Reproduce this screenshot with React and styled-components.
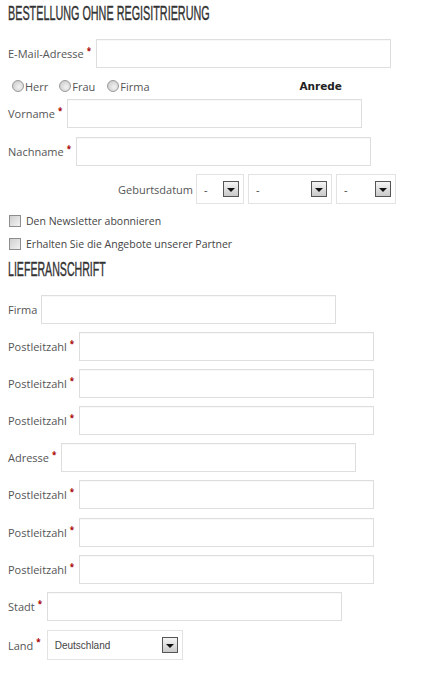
import React from "react";
import styled, { createGlobalStyle } from "styled-components";

const Global = createGlobalStyle`
  html, body { margin: 0; padding: 0; background: #fff; }
  body { font-family: "Open Sans", "Liberation Sans", sans-serif; color: #555; }
  * { box-sizing: border-box; }
`;

const Page = styled.div`
  width: 429px;
  height: 679px;
  padding: 0 8px;
  display: flex;
  flex-direction: column;
  overflow: hidden;
`;

const Heading = styled.h2`
  margin: ${(p) => p.$mt}px 0 0 0;
  height: 20px;
  line-height: 20px;
  font-family: "Liberation Sans", sans-serif;
  font-weight: 400;
  font-size: 20px;
  color: #333;
  white-space: nowrap;
  span {
    display: inline-block;
    transform: scaleX(${(p) => p.$sx});
    transform-origin: 0 50%;
    -webkit-text-stroke: 0.4px #333;
  }
`;

const Row = styled.div`
  display: flex;
  align-items: center;
  margin-top: ${(p) => p.$mt}px;
  padding-left: ${(p) => p.$pl || 0}px;
  height: ${(p) => p.$h || 29}px;
`;

const Label = styled.label`
  font-size: 11px;
  color: #555;
  white-space: nowrap;
`;

const Req = styled.sup`
  color: #a80000;
  font-size: 8px;
  font-weight: 700;
  margin-left: 3px;
  position: relative;
  top: -3px;
  line-height: 0;
`;

const Input = styled.div`
  width: ${(p) => p.$w || 295}px;
  height: 29px;
  margin-left: ${(p) => (p.$req ? 5 : 4)}px;
  border: 1px solid #dedede;
  background: #fff;
  box-shadow: inset 0 1px 1px rgba(0, 0, 0, 0.03);
`;

const Select = styled.div`
  width: ${(p) => p.$w}px;
  height: 30px;
  margin-left: ${(p) => p.$ml}px;
  border: 1px solid #e3e3e3;
  background: #fff;
  display: flex;
  align-items: center;
  justify-content: space-between;
  padding: 0 4px 0 7px;
  font-family: ${(p) => (p.$small ? '"Liberation Sans", sans-serif' : '"Open Sans", sans-serif')};
  font-size: ${(p) => (p.$small ? 10 : 11)}px;
  color: #444;
`;

const Arrow = styled.span`
  width: 16px;
  height: 16px;
  border: 1px solid #555;
  background: linear-gradient(#f4f4f4, #c9c9c9);
  display: flex;
  align-items: center;
  justify-content: center;
  &::after {
    content: "";
    border-left: 4px solid transparent;
    border-right: 4px solid transparent;
    border-top: 4px solid #111;
    margin-top: 2px;
  }
`;

const RadioGroup = styled.div`
  display: flex;
  align-items: center;
  margin-top: 11px;
  height: 14px;
  padding-left: 4px;
`;

const RadioItem = styled.span`
  display: inline-flex;
  align-items: center;
  font-size: 11px;
  color: #555;
  margin-right: ${(p) => p.$mr}px;
`;

const RadioDot = styled.span`
  width: 12px;
  height: 12px;
  border-radius: 50%;
  border: 1px solid #9a9a9a;
  background: radial-gradient(circle at 60% 60%, #f2f2f2 0%, #d2d2d2 70%, #bdbdbd 100%);
  margin-right: 1px;
`;

const Anrede = styled.span`
  margin-left: auto;
  margin-right: 79px;
  font-family: "DejaVu Sans", Verdana, sans-serif;
  font-weight: 700;
  font-size: 10.5px;
  color: #222;
`;

const CheckRow = styled.div`
  display: flex;
  align-items: center;
  margin-top: ${(p) => p.$mt}px;
  height: 12px;
  padding-left: 1px;
`;

const Box = styled.span`
  width: 12px;
  height: 12px;
  border: 1px solid #8d8d8d;
  background: linear-gradient(135deg, #cfcfcf, #f2f2f2);
  margin-right: 5px;
`;

const CheckText = styled.span`
  font-size: 10.5px;
  color: #444;
`;

const Field = ({ label, req, w, mt }) => (
  <Row $mt={mt}>
    <Label>{label}</Label>
    {req && <Req>*</Req>}
    <Input $req={req} $w={w} />
  </Row>
);

export default function App() {
  const pitch = [0, 8, 8, 8, 8, 8, 9, 8, 8, 9];
  return (
    <>
      <Global />
      <Page>
        <Heading $mt={3} $sx={0.54}>
          <span>BESTELLUNG OHNE REGISITRIERUNG</span>
        </Heading>
        <Field label="E-Mail-Adresse" req mt={16} />
        <RadioGroup>
          <RadioItem $mr={11}>
            <RadioDot />
            Herr
          </RadioItem>
          <RadioItem $mr={12}>
            <RadioDot />
            Frau
          </RadioItem>
          <RadioItem $mr={0}>
            <RadioDot />
            Firma
          </RadioItem>
          <Anrede>Anrede</Anrede>
        </RadioGroup>
        <Field label="Vorname" req mt={6} />
        <Field label="Nachname" req mt={9} />
        <Row $mt={8} $h={30} $pl={110}>
          <Label>Geburtsdatum</Label>
          <Select $w={48} $ml={3}>
            -<Arrow />
          </Select>
          <Select $w={84} $ml={4}>
            -<Arrow />
          </Select>
          <Select $w={60} $ml={4}>
            -<Arrow />
          </Select>
        </Row>
        <CheckRow $mt={11}>
          <Box />
          <CheckText>Den Newsletter abonnieren</CheckText>
        </CheckRow>
        <CheckRow $mt={11}>
          <Box />
          <CheckText>Erhalten Sie die Angebote unserer Partner</CheckText>
        </CheckRow>
        <Heading $mt={9} $sx={0.53}>
          <span>LIEFERANSCHRIFT</span>
        </Heading>
        <Field label="Firma" mt={16} />
        <Field label="Postleitzahl" req mt={pitch[1]} />
        <Field label="Postleitzahl" req mt={pitch[2]} />
        <Field label="Postleitzahl" req mt={pitch[3]} />
        <Field label="Adresse" req mt={pitch[4]} />
        <Field label="Postleitzahl" req mt={pitch[5]} />
        <Field label="Postleitzahl" req mt={pitch[6]} />
        <Field label="Postleitzahl" req mt={pitch[7]} />
        <Field label="Stadt" req mt={pitch[8]} />
        <Row $mt={pitch[9]} $h={30}>
          <Label>Land</Label>
          <Req>*</Req>
          <Select $w={136} $ml={6} $small>
            Deutschland
            <Arrow />
          </Select>
        </Row>
      </Page>
    </>
  );
}
